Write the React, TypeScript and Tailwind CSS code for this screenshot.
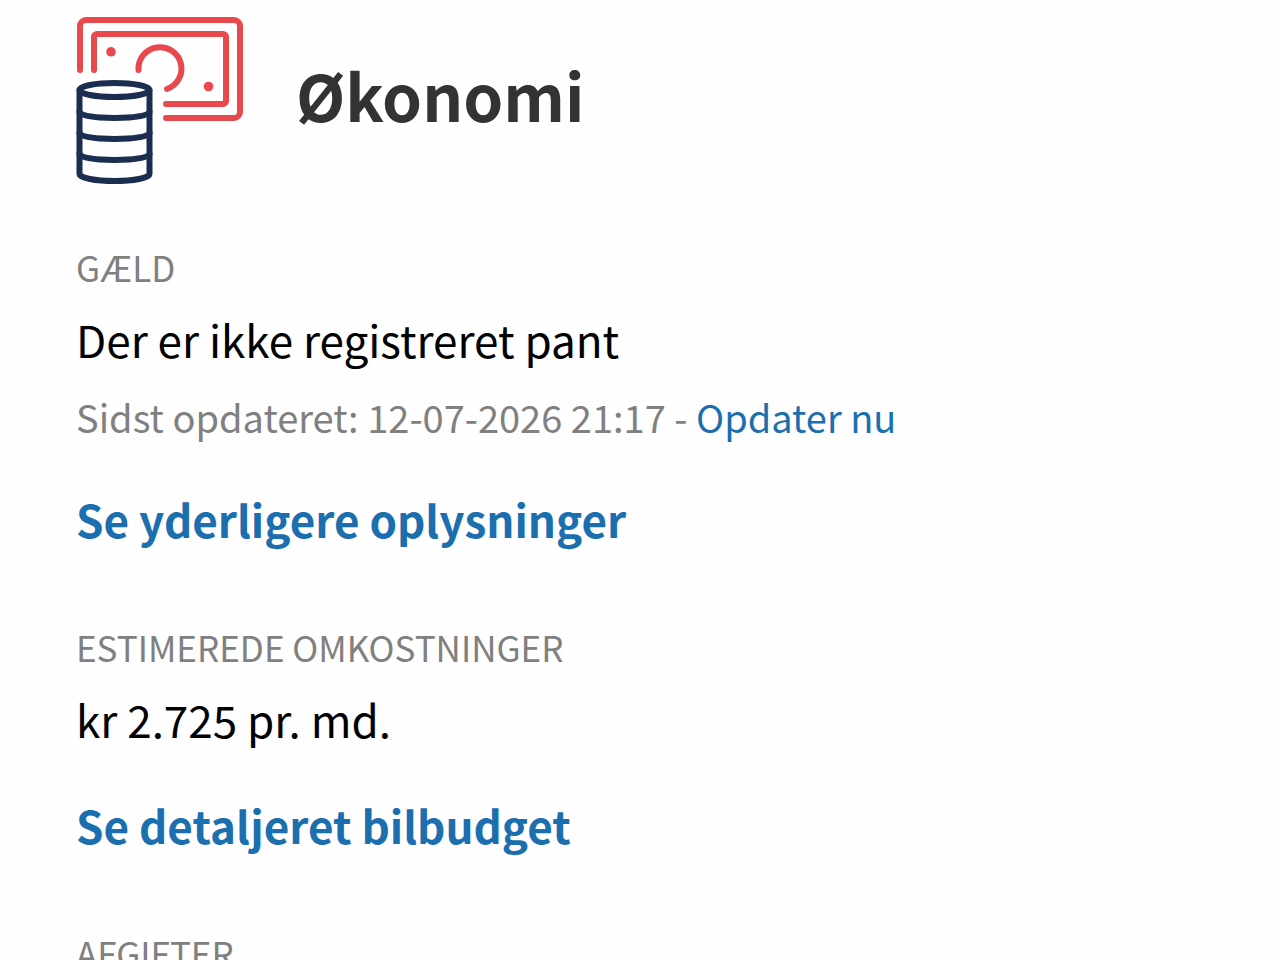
const sections = [
  {
    label: "Gæld",
    value: "Der er ikke registreret pant",
    updated: "12-07-2026 21:17",
    link: "Se yderligere oplysninger",
  },
  {
    label: "Estimerede omkostninger",
    value: "kr 2.725 pr. md.",
    link: "Se detaljeret bilbudget",
  },
  { label: "Afgifter" },
]

function EconomyIcon() {
  return (
    <svg className="size-42 shrink-0" viewBox="0 0 168 168" fill="none" strokeWidth="6" strokeLinecap="round" aria-hidden="true">
      {/* banknote */}
      <g stroke="#e8494d">
        <path d="M4 54V10a6 6 0 0 1 6-6h148a6 6 0 0 1 6 6v86a6 6 0 0 1-6 6H90" />
        <path d="M18 54V21a3 3 0 0 1 3-3h126a3 3 0 0 1 3 3v64a3 3 0 0 1-3 3H90" />
        <path d="M62.500 54A21.500 21.500 0 1 1 91 73" />
      </g>
      <g fill="#e8494d">
        <circle cx="35" cy="35.800" r="4.800" />
        <circle cx="132.500" cy="70.500" r="4.800" />
      </g>
      {/* coin stack */}
      <g stroke="#1b2d50">
        <ellipse cx="38.500" cy="74" rx="35" ry="7" />
        <path d="M3.500 74v84c0 4 16 7 35 7s35-3 35-7V74" />
        <path d="M3.500 96c2 4 17 6 35 6s33-2 35-6" />
        <path d="M3.500 117c2 4 17 6 35 6s33-2 35-6" />
        <path d="M3.500 138c2 4 17 6 35 6s33-2 35-6" />
      </g>
    </svg>
  )
}

export default function App() {
  return (
    <main className="min-h-screen bg-[#fefefe] px-19 pt-4 font-['Noto_Sans_CJK_SC','Noto_Sans',sans-serif] text-black">
      <header className="flex items-center gap-13">
        <EconomyIcon />
        <h1 className="pb-3 text-[64px] leading-[80px] font-bold text-[#333333]">Økonomi</h1>
      </header>

      <div className="mt-[63px] flex flex-col gap-20">
        {sections.map((section) => (
          <section key={section.label}>
            <h2 className="text-[35px] leading-10 text-[#808080] uppercase">{section.label}</h2>
            {section.value && <p className="mt-6 text-[44px] leading-14">{section.value}</p>}
            {section.updated && (
              <p className="mt-[26px] text-[38px] leading-12 text-[#808080]">
                Sidst opdateret: {section.updated} -{" "}
                <a href="#" className="text-[#1b6fae]">
                  Opdater nu
                </a>
              </p>
            )}
            {section.link && (
              <a href="#" className="mt-[50px] block w-fit text-[44px] leading-14 font-bold text-[#1b6fae]">
                {section.link}
              </a>
            )}
          </section>
        ))}
      </div>
    </main>
  )
}
